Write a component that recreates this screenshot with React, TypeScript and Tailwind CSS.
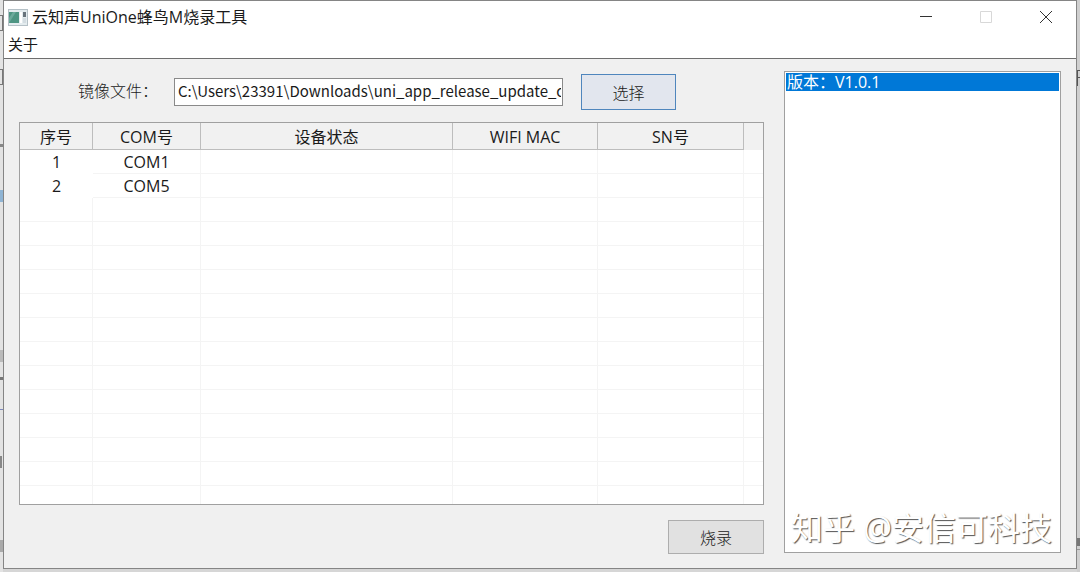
import { useState } from "react";

type Device = { id: number; com: string; status: string; mac: string; sn: string };

const devices: Device[] = [
  { id: 1, com: "COM1", status: "", mac: "", sn: "" },
  { id: 2, com: "COM5", status: "", mac: "", sn: "" },
];

const logs = ["版本：V1.0.1"];
const emptyRows = Array.from({ length: 12 }, (_, i) => i);

const headCell =
  "border-r border-b border-[#bdbdbd] bg-[#f1f1f1] font-normal text-center p-0 pt-0.5";
const cell = "border-r border-b border-[#f4f4f4] text-center p-0";
const song = "font-['Noto_Sans_CJK_SC',sans-serif] font-light text-[#1a1a1a]";

function AppIcon() {
  return (
    <svg width="20" height="17" viewBox="0 0 20 17">
      <rect x=".5" y=".5" width="19" height="16" fill="#e4ecef" stroke="#b4c0c6" />
      <rect x="1" y="3" width="10" height="11" fill="#4e9583" />
      <path d="M1 9l4-6h3l-7 11z" fill="#6caa9c" />
      <rect x="12" y="3" width="2" height="11" fill="#fff" />
      <rect x="15" y="3" width="3" height="5" fill="#68747c" />
      <rect x="15" y="9" width="3" height="5" fill="#d3dce1" />
    </svg>
  );
}

function TitleBar() {
  return (
    <header className="bg-white border-b border-[#6e6e6e]">
      <div className="flex items-center h-8 pl-1">
        <AppIcon />
        <h1 className="ml-1 flex-1 text-base">云知声UniOne蜂鸟M烧录工具</h1>
        <div className="flex">
          <button aria-label="最小化" className="w-15 h-8 flex items-center justify-center">
            <svg width="12" height="12" viewBox="0 0 12 12" stroke="#333" fill="none">
              <path d="M0 5.5h12" />
            </svg>
          </button>
          <button
            aria-label="最大化"
            disabled
            className="w-15 h-8 flex items-center justify-center"
          >
            <svg width="12" height="12" viewBox="0 0 12 12" stroke="#d8d8d8" fill="none">
              <path d="M.5 .5h11v11h-11z" />
            </svg>
          </button>
          <button aria-label="关闭" className="w-15 h-8 flex items-center justify-center">
            <svg width="12" height="12" viewBox="0 0 12 12" stroke="#333" fill="none">
              <path d="M0 0l12 12M12 0L0 12" />
            </svg>
          </button>
        </div>
      </div>
      <nav className="flex items-start h-[25px] pl-1">
        <button className="text-[15px] leading-[22px]">关于</button>
      </nav>
    </header>
  );
}

function DeviceTable() {
  return (
    <div className="flex-1 flex bg-white border border-[#a0a0a0]">
      <table className="w-full table-fixed border-separate border-spacing-0">
        <colgroup>
          <col className="w-[73px]" />
          <col className="w-[108px]" />
          <col />
          <col className="w-[145px]" />
          <col className="w-[146px]" />
          <col className="w-[19px]" />
        </colgroup>
        <thead>
          <tr className="h-[27px]">
            <th className={headCell}>序号</th>
            <th className={headCell}>COM号</th>
            <th className={headCell}>设备状态</th>
            <th className={headCell}>WIFI MAC</th>
            <th className={headCell}>SN号</th>
            <td className="bg-[#f1f1f1]"></td>
          </tr>
        </thead>
        <tbody>
          {devices.map((d) => (
            <tr key={d.id} className="h-6">
              <td className="text-center p-0">{d.id}</td>
              <td className={cell}>{d.com}</td>
              <td className={cell}>{d.status}</td>
              <td className={cell}>{d.mac}</td>
              <td className={cell}>{d.sn}</td>
              <td className="border-b border-[#f4f4f4]"></td>
            </tr>
          ))}
          {emptyRows.map((i) => (
            <tr key={i} className="h-6">
              <td className={cell}></td>
              <td className={cell}></td>
              <td className={cell}></td>
              <td className={cell}></td>
              <td className={cell}></td>
              <td className="border-b border-[#f4f4f4]"></td>
            </tr>
          ))}
          <tr>
            <td className="border-r border-[#f4f4f4]"></td>
            <td className="border-r border-[#f4f4f4]"></td>
            <td className="border-r border-[#f4f4f4]"></td>
            <td className="border-r border-[#f4f4f4]"></td>
            <td className="border-r border-[#f4f4f4]"></td>
            <td></td>
          </tr>
        </tbody>
      </table>
    </div>
  );
}

// slivers of the page that lies behind the window
function BackdropLeft() {
  return (
    <div className="relative w-[3px] bg-[#e3e3e3]">
      <i className="absolute left-0 top-[15px] w-[3px] h-4 border-y border-r border-[#777]" />
      <i className="absolute left-0 top-[69px] w-[3px] h-4 border-y border-r border-[#777]" />
      <i className="absolute left-0 top-36 w-[3px] h-[3px] bg-[#888]" />
      <i className="absolute left-0 top-[190px] w-[3px] h-3 bg-[#8fb4d4]" />
      <i className="absolute left-0 top-[350px] w-[3px] h-3 bg-[#bbb]" />
      <i className="absolute left-0 top-[377px] w-[3px] h-[3px] bg-[#777]" />
      <i className="absolute left-0 top-[409px] w-[3px] h-px bg-[#7d88bb]" />
      <i className="absolute left-0 top-[456px] w-[2px] h-3 bg-[#888]" />
      <i className="absolute left-0 top-[540px] w-[3px] h-3 bg-[#aaa]" />
    </div>
  );
}

function BackdropRight() {
  return (
    <div className="relative w-[3px] bg-[#cfcfcf]">
      <i className="absolute left-0 top-[70px] w-[3px] h-4 border-t border-l border-[#555]" />
      <i className="absolute left-0 top-[77px] w-[3px] h-px bg-[#555]" />
      <i className="absolute left-0 top-[538px] w-[3px] h-2 bg-[#777]" />
      <i className="absolute left-0 top-[549px] w-[3px] h-px bg-[#999]" />
    </div>
  );
}

export default function App() {
  const [path, setPath] = useState("C:\\Users\\23391\\Downloads\\uni_app_release_update_cr");

  return (
    <div className="min-h-screen flex bg-[#d6d6d6] text-base leading-5 text-[#1a1a1a] font-['Open_Sans','Noto_Sans_CJK_SC',sans-serif]">
      <BackdropLeft />
      <div className="flex-1 min-w-0 mb-[3px] flex flex-col bg-[#f0f0f0] border border-[#858585]">
        <TitleBar />
        <main className="flex-1 flex gap-5 px-[15px] pt-3 pb-[14px]">
          <section className="flex-1 min-w-0 flex flex-col">
            <div className="flex items-center h-[42px] mb-[9px]">
              <label htmlFor="image" className={`${song} w-[155px] pl-[59px] pb-1`}>
                镜像文件：
              </label>
              <input
                id="image"
                value={path}
                onChange={(e) => setPath(e.target.value)}
                className="h-7 flex-1 min-w-0 bg-white border border-[#8a8a8a] pl-[3px] pr-px pb-1 font-['Noto_Sans_CJK_SC',sans-serif] text-[15px] outline-none"
              />
              <button
                className={`${song} ml-[18px] mr-22 w-[95px] h-9 bg-[#e2e6ee] border border-[#4f86bd]`}
              >
                选择
              </button>
            </div>
            <DeviceTable />
            <button
              className={`${song} self-end mt-[15px] w-24 h-[34px] bg-[#e1e1e1] border border-[#adadad]`}
            >
              烧录
            </button>
          </section>
          <aside className="relative w-[277px] mb-px bg-white border border-[#a0a0a0] p-px">
            <ul>
              {logs.map((log) => (
                <li key={log} className="bg-[#0078d7] text-white h-[18px] leading-[18px] pl-px">
                  {log}
                </li>
              ))}
            </ul>
            <p className="absolute bottom-2 left-1.5 whitespace-nowrap text-[32px] leading-8 text-white [text-shadow:1px_1px_1px_#555]">
              知乎 @安信可科技
            </p>
          </aside>
        </main>
      </div>
      <BackdropRight />
    </div>
  );
}
